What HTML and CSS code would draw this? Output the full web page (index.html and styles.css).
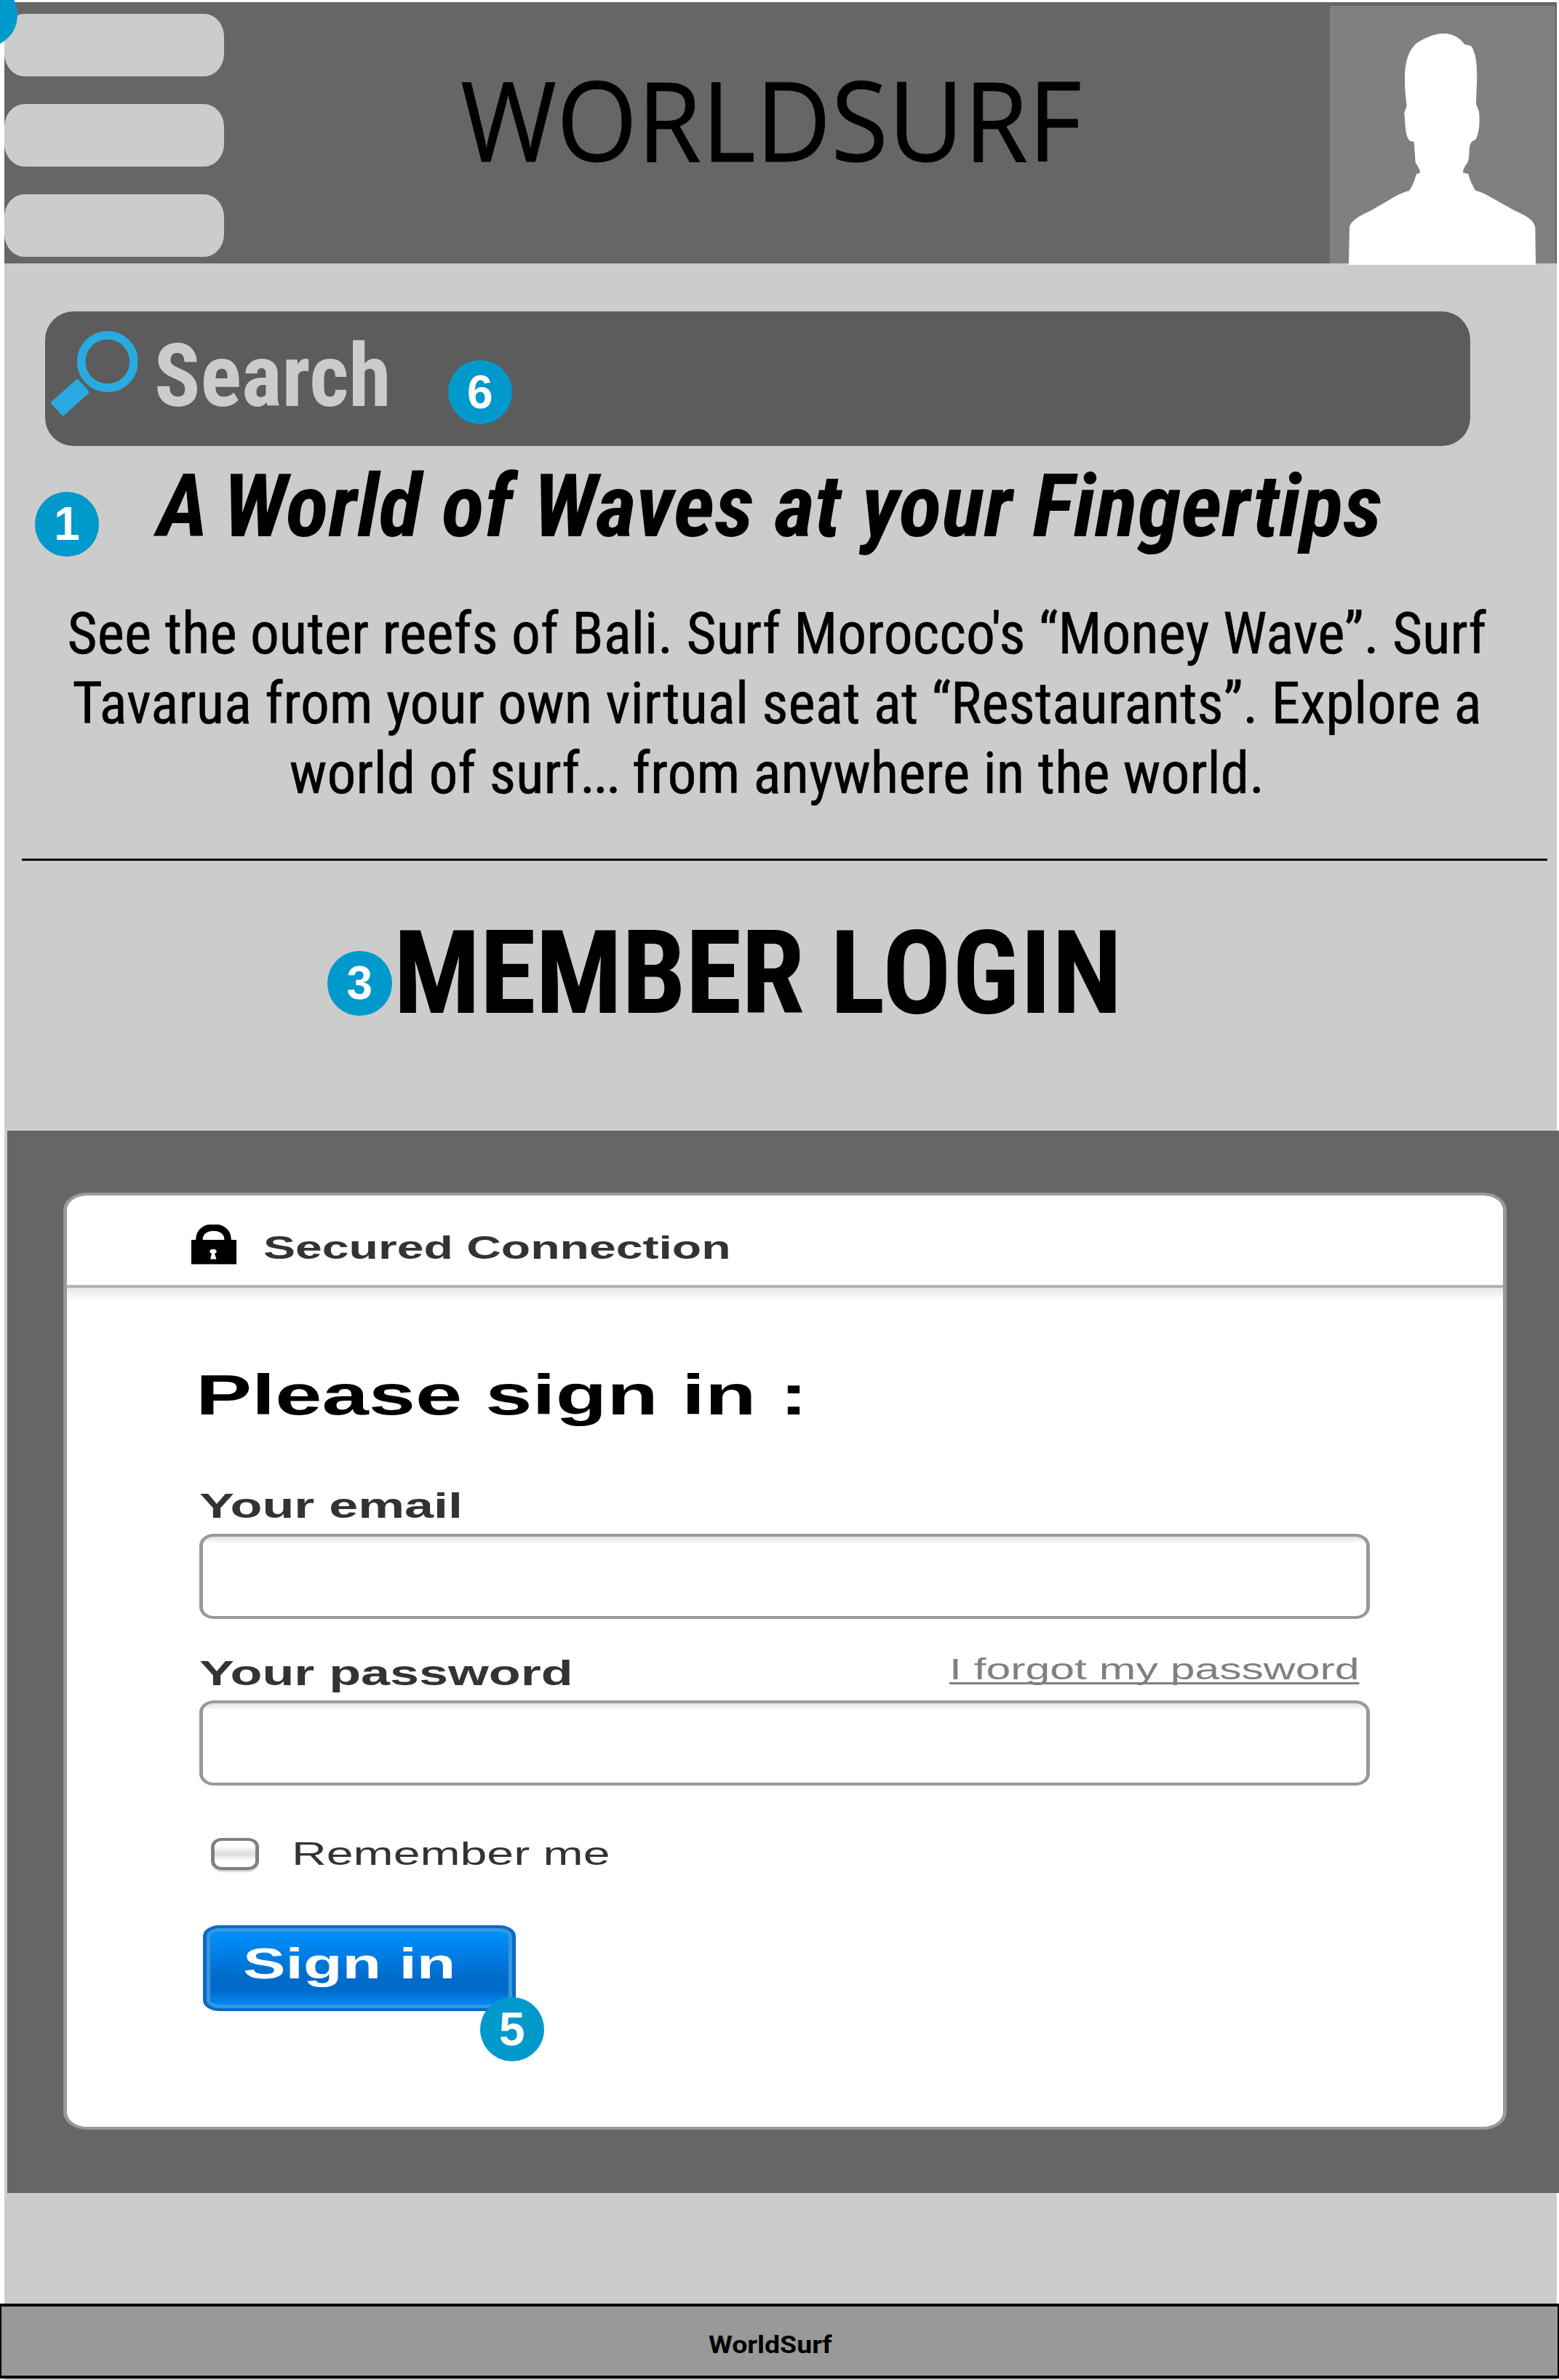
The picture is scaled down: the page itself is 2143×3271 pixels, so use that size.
FILE: index.html
```html
<!DOCTYPE html>
<html lang="en">
<head>
<meta charset="utf-8">
<title>WorldSurf</title>
<link rel="stylesheet" href="styles.css">
</head>
<body>
<div class="page">
  <header class="topbar">
    <div class="menu">
      <span class="menu-bar"></span>
      <span class="menu-bar"></span>
      <span class="menu-bar"></span>
    </div>
    <div class="logo">WORLDSURF</div>
    <svg class="avatar" viewBox="144 24 930 1069" preserveAspectRatio="none">
      <rect x="144" y="24" width="930" height="1062" fill="#808080"/>
      <path fill="#fff" d="M222 1093 L225 937 C232 912 253 896 310 870 L425 803 Q448 792 470 787 C482 774 494 742 501 718 L517 712 C514 695 505 683 497 670 L491 585 L475 581 C455 566 456 520 451 466 C454 452 460 450 461 430 C456 400 453 360 453 320 C454 250 470 205 503 177 C540 154 580 138 612 138 C650 138 680 156 700 183 L726 189 C746 215 751 265 751 320 L747 430 C758 454 761 462 761 492 C761 530 755 555 747 572 C737 585 721 576 719 620 C718 640 718 655 713 668 C704 683 694 693 693 712 L715 717 C722 742 733 769 746 787 Q766 791 786 801 L905 868 C955 890 983 906 991 937 L993 1093 Z"/>
    </svg>
  </header>

  <main class="content">
    <div class="search">
      <svg class="search-icon" viewBox="0 0 122 122">
        <circle cx="80.8" cy="44" r="36.2" fill="none" stroke="#29abe2" stroke-width="11.6"/>
        <path d="M39.5 70 L53.5 86 L19.5 116.5 L5 100.500 Z" fill="#29abe2" stroke="#29abe2" stroke-width="4" stroke-linejoin="round"/>
      </svg>
      <span class="search-label">Search</span>
    </div>
    <h1 class="headline"><span class="lead">A </span>World of Waves at your Fingertips</h1>
    <p class="intro">See the outer reefs of Bali. Surf Morocco's “Money Wave”. Surf<br>Tavarua from your own virtual seat at “Restaurants”. Explore a<br>world of surf<span class="dots">...</span> from anywhere in the world.</p>
    <hr class="rule">
    <h2 class="member"><span class="tight">MEMBER</span> <span class="loose">LOGIN</span></h2>
  </main>

  <section class="login">
    <form class="card">
      <div class="card-head">
        <svg class="lock" viewBox="0 0 62 55">
          <path d="M11 24 V20 C11 -1.500 50 -1.500 50 20 V24" fill="none" stroke="#000" stroke-width="9.500"/>
          <rect y="21" width="62" height="33.500"/>
          <path d="M28 40 A4.800 3.300 0 1 1 32 40 L34.500 47.500 H26 Z" fill="#fff"/>
        </svg>
        <span class="secured">Secured Connection</span>
      </div>
      <div class="card-body">
        <h3 class="please">Please sign in :</h3>
        <label class="label" for="email">Your email</label>
        <input class="field" id="email" type="email">
        <div class="label-row">
          <label class="label" for="password">Your password</label>
          <a class="forgot">I forgot my password</a>
        </div>
        <input class="field" id="password" type="password">
        <div class="remember">
          <span class="checkbox"></span>
          <span class="remember-label">Remember me</span>
        </div>
        <div class="button"><span class="button-label">Sign in</span></div>
      </div>
    </form>
  </section>

  <footer class="footer"><span class="footer-label">WorldSurf</span></footer>

  <span class="badge badge-menu"></span>
  <span class="badge badge-search">6</span>
  <span class="badge badge-headline">1</span>
  <span class="badge badge-member">3</span>
  <span class="badge badge-button">5</span>
</div>
</body>
</html>
```
FILE: styles.css
```css
* {
  box-sizing: border-box;
}

body {
  margin: 0;
  background: #fff;
}

h1, h2, h3, p, hr {
  margin: 0;
  border: 0;
}

.page {
  position: relative;
  display: flex;
  flex-direction: column;
  width: 2143px;
  height: 3271px;
  padding: 3px 3px 0 6px;
  overflow: hidden;
  background: linear-gradient(#ccc, #ccc) 6px 3px / 2134px 3268px no-repeat #fff;
}

/* Top bar */
.topbar {
  display: flex;
  height: 358.5px;
  flex: none;
  background: #666;
}

.menu {
  display: flex;
  flex-direction: column;
  gap: 38px;
  width: 302px;
  padding-top: 16.3px;
}

.menu-bar {
  height: 86px;
  border-radius: 28px / 31px;
  background: #ccc;
}

.logo {
  width: 1195px;
  height: 152px;
  margin: 84.5px 0 0 324.5px;
  font: 400 152px/1 "Open Sans", sans-serif;
  transform: scaleX(.94);
  transform-origin: left;
  white-space: nowrap;
  color: #000;
  -webkit-text-stroke: .8px #000;
}

.avatar {
  flex: none;
  width: 310px;
  height: 356.3px;
  margin-top: 5px;
  margin-left: auto;
  margin-right: 2px;
}

/* Intro */
.content {
  flex: none;
  height: 1192.5px;
  font-family: "Roboto Condensed", Roboto, sans-serif;
  color: #000;
}

.search {
  display: flex;
  width: 1959.5px;
  height: 185px;
  margin: 66.5px 0 0 55.5px;
  border-radius: 39px;
  background: #5c5c5c;
}

.search-icon {
  width: 122px;
  height: 122px;
  margin: 25px 0 0 5.5px;
}

.search-label {
  height: 120px;
  margin: 29px 0 0 23px;
  font-weight: 700;
  font-size: 120px;
  line-height: 120px;
  color: #ccc;
  transform: scaleX(.9815);
  transform-origin: left;
}

.headline {
  margin: 23px 0 0 210.3px;
  font-size: 121px;
  line-height: 121px;
  font-weight: 700;
  font-style: italic;
  white-space: nowrap;
  transform: scaleX(1.007);
  transform-origin: left;
}

.lead {
  letter-spacing: -4px;
}

.intro {
  width: 2124px;
  margin-top: 65.5px;
  font-size: 80.5px;
  line-height: 96px;
  text-align: center;
  white-space: nowrap;
  transform: scaleX(.9873);
  -webkit-text-stroke: .5px #000;
}

.dots {
  letter-spacing: -3.2px;
}

.rule {
  width: 2097px;
  height: 3px;
  margin: 69.5px 0 0 24px;
  background: #000;
}

.member {
  margin: 74.6px 0 0 534.9px;
  font-size: 160px;
  line-height: 160px;
  font-weight: 700;
  white-space: nowrap;
  transform: scaleX(.984);
  transform-origin: left;
}

.tight {
  letter-spacing: -.8px;
}

.loose {
  letter-spacing: 1.2px;
}

/* Login */
.login {
  flex: none;
  height: 1460px;
  margin: 0 -3px 0 4px;
  padding: 84.7px 0 0 76.5px;
  background: #666;
  font-family: "Liberation Sans", Arial, sans-serif;
  color: #333;
}

.card {
  width: 1984.5px;
  height: 1288.3px;
  border: 4px solid #999;
  border-left-width: 5px;
  border-right-width: 5px;
  border-radius: 33px / 24px;
  background: #fff;
  white-space: nowrap;
}

.card-head {
  display: flex;
  height: 127.3px;
  padding-left: 171px;
  border-bottom: 4px solid #b3b3b3;
}

.lock {
  width: 62px;
  height: 55px;
  margin-top: 40.3px;
}

.secured {
  height: 44.5px;
  margin: 50.2px 0 0 37.7px;
  font-size: 44.5px;
  line-height: 44.5px;
  font-weight: 700;
  transform: scaleX(1.485);
  transform-origin: left;
}

.card-body {
  padding: 109.4px 0 0 182.7px;
  background: linear-gradient(#e6e6e6, #fff) 0 0 / 100% 18px no-repeat;
}

.please {
  width: 600px;
  margin-left: -5.2px;
  font-size: 77.5px;
  line-height: 77.5px;
  font-weight: 700;
  color: #000;
  transform: scaleX(1.491);
  transform-origin: left;
}

.label {
  display: block;
  width: 400px;
  margin: 88.5px 0 0 -.3px;
  font-size: 48.5px;
  line-height: 48.5px;
  font-weight: 700;
  transform: scaleX(1.481);
  transform-origin: left;
}

.field {
  display: block;
  width: 1609.2px;
  height: 116.6px;
  margin: 14.1px 0 0;
  padding: 0 24px;
  border: 4px solid #999;
  border-left-width: 5px;
  border-right-width: 5px;
  border-radius: 20px / 16px;
  background: linear-gradient(#e3e3e3, #f5f5f5 7px, #fff 8px);
  font-size: 48px;
  outline: none;
}

.label-row {
  display: flex;
  height: 50.4px;
  margin-top: 48.8px;
}

.label-row .label {
  margin-top: 1.9px;
}

.label-row + .field {
  margin-top: 13.2px;
}

.forgot {
  width: 376px;
  height: 40.5px;
  margin-top: .7px;
  margin-left: 631.3px;
  font-size: 40.5px;
  line-height: 40.5px;
  color: #808080;
  text-decoration: underline;
  text-decoration-thickness: 3px;
  text-underline-offset: 3.5px;
  text-decoration-skip-ink: none;
  transform: scaleX(1.499);
  transform-origin: left;
}

.remember {
  display: flex;
  height: 45px;
  margin-top: 71.3px;
  padding-left: 15.8px;
}

.checkbox {
  width: 66.3px;
  height: 43.7px;
  margin-top: 1.3px;
  border: 4px solid #808080;
  border-left-width: 5.5px;
  border-right-width: 5.5px;
  border-radius: 15px / 12px;
  background: linear-gradient(#fff 20%, #dcdcdc 50%, #fff 75%);
  box-shadow: 0 4px 3px -2px #bbb;
}

.remember-label {
  margin-left: 44.5px;
  height: 45px;
  font-size: 45px;
  line-height: 45px;
  transform: scaleX(1.47);
  transform-origin: left;
}

.button {
  width: 429.6px;
  height: 118px;
  margin: 75.9px 0 0 5.1px;
  padding: 20.500px 0 0 49.500px;
  border: solid #0a6ac6;
  border-width: 4px 5px;
  border-radius: 22px / 15px;
  background: linear-gradient(#008ffb 8%, #006bcb 62%, #006bcb 78%, #0087ef 94%);
  box-shadow: inset 0 0 0 5px #3797db;
}

.button-label {
  display: block;
  width: 200px;
  font-size: 59px;
  line-height: 59px;
  font-weight: 700;
  color: #fff;
  transform: scaleX(1.487);
  transform-origin: left;
}

/* Footer */
.footer {
  flex: none;
  height: 103.5px;
  margin: 151.5px -3px 0 -6px;
  padding: 37px 0 0 972px;
  border: 4px solid #000;
  border-left-width: 2px;
  border-right-width: 2px;
  background: #999;
}

.footer-label {
  display: block;
  width: 160px;
  font: 700 32.5px/32.5px Roboto, sans-serif;
  color: #000;
  transform: scaleX(1.153);
  transform-origin: left;
}

/* Numbered markers over the page */
.badge {
  position: absolute;
  width: 88.6px;
  height: 88.6px;
  border-radius: 50%;
  background: #09c;
  color: #fff;
  font: 700 64px/88.6px "Liberation Sans", Arial, sans-serif;
  text-align: center;
}

.badge-menu { left: -64.500px; top: -24px; }
.badge-search { left: 615.600px; top: 494.500px; }
.badge-headline { left: 47.700px; top: 676px; }
.badge-member { left: 450px; top: 1307px; }
.badge-button { left: 659.500px; top: 2744.600px; }
```
